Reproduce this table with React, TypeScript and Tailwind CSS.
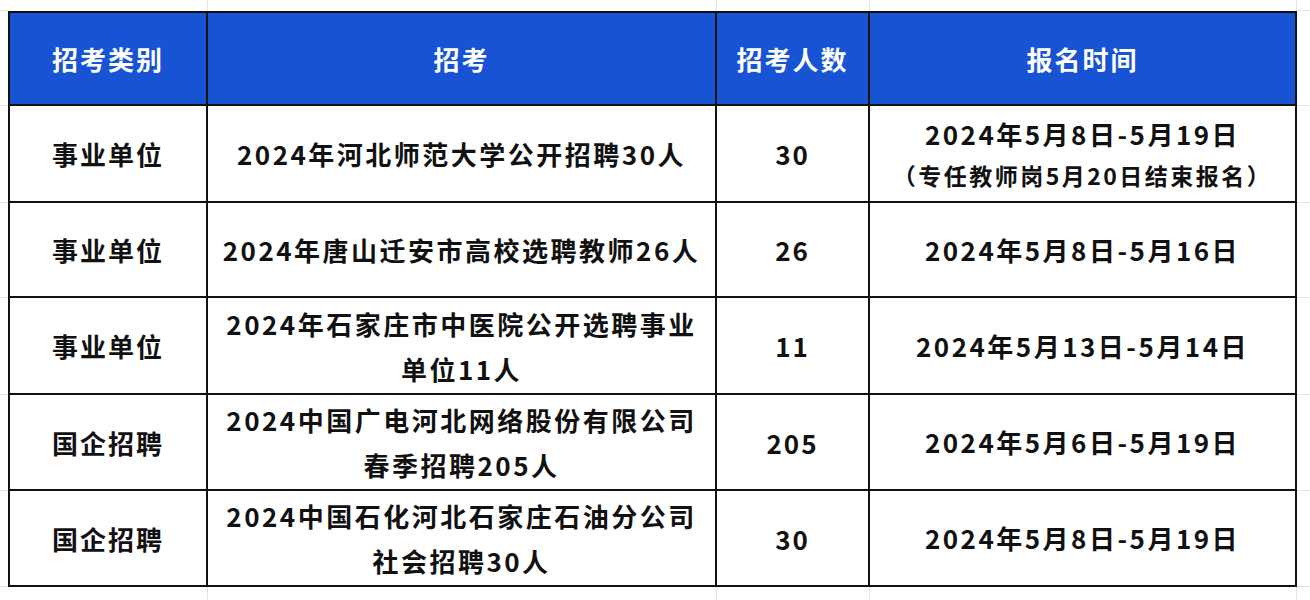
import React from 'react';

type Row = {
  kind: string;
  title: string[];
  count: string;
  date: string;
  note?: string;
};

const rows: Row[] = [
  {
    kind: '事业单位',
    title: ['2024年河北师范大学公开招聘30人'],
    count: '30',
    date: '2024年5月8日-5月19日',
    note: '（专任教师岗5月20日结束报名）',
  },
  { kind: '事业单位', title: ['2024年唐山迁安市高校选聘教师26人'], count: '26', date: '2024年5月8日-5月16日' },
  { kind: '事业单位', title: ['2024年石家庄市中医院公开选聘事业', '单位11人'], count: '11', date: '2024年5月13日-5月14日' },
  { kind: '国企招聘', title: ['2024中国广电河北网络股份有限公司', '春季招聘205人'], count: '205', date: '2024年5月6日-5月19日' },
  { kind: '国企招聘', title: ['2024中国石化河北石家庄石油分公司', '社会招聘30人'], count: '30', date: '2024年5月8日-5月19日' },
];

const headers = ['招考类别', '招考', '招考人数', '报名时间'];

const font = { fontFamily: '"Noto Sans CJK SC", "Noto Sans", sans-serif' };

export default function App() {
  return (
    <div
      className="w-[1310px] h-[600px] bg-white overflow-hidden grid grid-cols-[8px_200px_509px_153px_427px_1fr] grid-rows-[11px_95px_97px_95px_97px_96px_96px_1fr]"
      style={font}
    >
      {/* top margin strip */}
      <div className="border-b border-[#e4e4e4]" />
      <div className="border-r border-[#e4e4e4]" />
      <div className="border-r border-[#e4e4e4]" />
      <div className="border-r border-[#e4e4e4]" />
      <div className="border-r border-[#e4e4e4]" />
      <div className="border-b border-[#e4e4e4]" />

      {/* header */}
      <div className="border-b border-[#e4e4e4]" />
      {headers.map((h, i) => (
        <div
          key={h}
          className={`bg-[#1753d3] border-t-2 border-b-2 border-r-2 border-[#111] flex items-center justify-center text-white font-bold text-[26px] tracking-[2px] ${i === 0 ? 'border-l-2' : ''}`}
        >
          {h}
        </div>
      ))}
      <div className="border-b border-[#e4e4e4]" />

      {/* body */}
      {rows.map((r, idx) => (
        <React.Fragment key={idx}>
          <div className="border-b border-[#e4e4e4]" />
          <div className="border-l-2 border-r-2 border-b-2 border-[#111] flex items-center justify-center text-[#111] font-bold text-[26px] tracking-[2px]">
            {r.kind}
          </div>
          <div className="border-r-2 border-b-2 border-[#111] flex flex-col items-center justify-center text-[#111] font-bold text-[26px] tracking-[2.5px] leading-[45px]">
            {r.title.map((t) => (
              <span key={t}>{t}</span>
            ))}
          </div>
          <div className="border-r-2 border-b-2 border-[#111] flex items-center justify-center text-[#111] font-bold text-[26px] tracking-[2px]">
            {r.count}
          </div>
          <div className="border-r-2 border-b-2 border-[#111] flex flex-col items-center justify-center text-[#111] font-bold">
            <span className="text-[26px] leading-[42px] tracking-[2.5px]">{r.date}</span>
            {r.note && <span className="text-[23px] leading-[40px] tracking-[2.5px]">{r.note}</span>}
          </div>
          <div className="border-b border-[#e4e4e4]" />
        </React.Fragment>
      ))}

      {/* bottom margin strip */}
      <div />
      <div className="border-r border-[#e4e4e4]" />
      <div className="border-r border-[#e4e4e4]" />
      <div className="border-r border-[#e4e4e4]" />
      <div className="border-r border-[#e4e4e4]" />
      <div />
    </div>
  );
}
